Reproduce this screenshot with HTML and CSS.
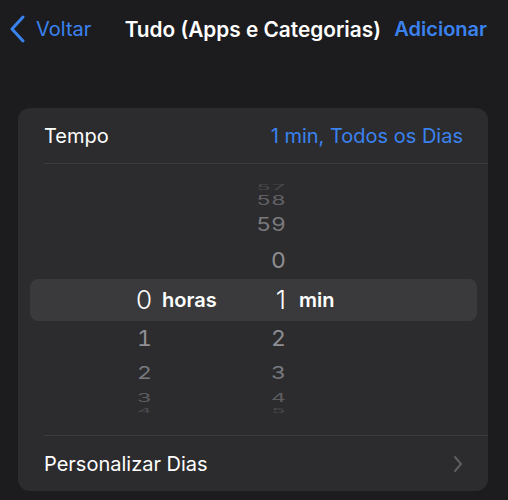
FILE: index.html
```html
<!DOCTYPE html>
<html lang="pt">
<head>
  <meta charset="UTF-8" />
  <meta name="viewport" content="width=device-width, initial-scale=1.0" />
  <title>Tudo (Apps e Categorias)</title>
  <link rel="stylesheet" href="styles.css">
</head>
<body>
  <div class="nav">
    <a class="back">
      <svg width="16" height="28" viewBox="0 0 16 28"><path d="M13 2 L2 14 L13 26" fill="none" stroke="#3a82f0" stroke-width="3" stroke-linecap="round" stroke-linejoin="round"/></svg>
      Voltar
    </a>
    <div class="title">Tudo (Apps e Categorias)</div>
    <a class="add">Adicionar</a>
  </div>

  <div class="card">
    <div class="row">
      <span>Tempo</span>
      <span class="value">1 min, Todos os Dias</span>
    </div>

    <div class="picker">
      <div class="wheel w1"><div class="cell"></div><div class="cell"><span class="num">57</span></div></div>
      <div class="wheel w2"><div class="cell"></div><div class="cell"><span class="num">58</span></div></div>
      <div class="wheel w3"><div class="cell"></div><div class="cell"><span class="num">59</span></div></div>
      <div class="wheel w4"><div class="cell"></div><div class="cell"><span class="num">0</span></div></div>
      <div class="wheel selected">
        <div class="cell"><span class="num">0</span><span class="unit">horas</span></div>
        <div class="cell"><span class="num">1</span><span class="unit">min</span></div>
      </div>
      <div class="wheel w5"><div class="cell"><span class="num">1</span></div><div class="cell"><span class="num">2</span></div></div>
      <div class="wheel w6"><div class="cell"><span class="num">2</span></div><div class="cell"><span class="num">3</span></div></div>
      <div class="wheel w7"><div class="cell"><span class="num">3</span></div><div class="cell"><span class="num">4</span></div></div>
      <div class="wheel w8"><div class="cell"><span class="num">4</span></div><div class="cell"><span class="num">5</span></div></div>
    </div>

    <div class="row link">
      <span>Personalizar Dias</span>
      <svg width="10" height="18" viewBox="0 0 10 18"><path d="M2 2 L8 9 L2 16" fill="none" stroke="#5d5d62" stroke-width="2" stroke-linecap="round" stroke-linejoin="round"/></svg>
    </div>
  </div>
</body>
</html>
```

FILE: styles.css
```css
* {
  box-sizing: border-box;
}
body {
  margin: 0;
  background: #1c1c1e;
  color: #fff;
  font-family: Inter, 'Noto Sans', sans-serif;
  width: 508px;
  height: 500px;
  overflow: hidden;
}
.nav {
  height: 58px;
  padding: 0 21px 0 10px;
  display: flex;
  align-items: center;
  justify-content: space-between;
  font-size: 20px;
}
.back {
  display: flex;
  align-items: center;
  gap: 10px;
  color: #3a82f0;
}
.title {
  font-size: 20.8px;
  font-weight: 600;
  margin-left: 20px;
}
.add {
  color: #3a82f0;
  font-weight: 600;
}
.card {
  margin: 50px 20px 0 18px;
  background: #2c2c2e;
  border-radius: 12px;
}
.row {
  height: 55px;
  margin-left: 26px;
  padding-right: 25px;
  display: flex;
  align-items: center;
  justify-content: space-between;
  font-size: 20px;
}
.value {
  color: #3a82f0;
}
.link {
  height: 56px;
  border-top: 1px solid #3c3c3f;
}
.picker {
  height: 272px;
  border-top: 1px solid #3c3c3f;
  margin-left: 26px;
  display: flex;
  flex-direction: column;
  justify-content: center;
  padding-bottom: 2px;
}
.wheel {
  display: flex;
  margin: 0 11px 0 -14px;
  padding-left: 72px;
  align-items: center;
  overflow: hidden;
}
.cell {
  width: 134px;
  display: flex;
  align-items: center;
}
.num {
  width: 50px;
  text-align: right;
  font-size: 23px;
  font-variant-numeric: tabular-nums;
  color: #8e8e93;
  display: inline-block;
}
.unit {
  margin-left: 10px;
  font-size: 20px;
  font-weight: 600;
}
.cell + .cell .unit {
  margin-left: 13px;
}
.selected {
  height: 42px;
  background: #3a3a3c;
  border-radius: 8px;
}
.selected .num {
  font-size: 26px;
  font-weight: 300;
  font-variant-numeric: normal;
  color: #fff;
}
.w1 { height: 10px; }
.w1 .num { transform: scaleY(0.3); opacity: 0.3; }
.w2 { height: 16px; }
.w2 .num { transform: scaleY(0.55); opacity: 0.55; }
.w3 { height: 32px; }
.w3 .num { transform: scaleY(0.8); opacity: 0.8; }
.w4 { height: 38px; }
.w4 .num { transform: scaleY(0.95); }
.w5 { height: 36px; }
.w5 .num { transform: scaleY(0.93); }
.w6 { height: 32px; }
.w6 .num { transform: scaleY(0.78); opacity: 0.8; }
.w7 { height: 18px; }
.w7 .num { transform: scaleY(0.5); opacity: 0.5; }
.w8 { height: 8px; }
.w8 .num { transform: scaleY(0.25); opacity: 0.3; }
```
